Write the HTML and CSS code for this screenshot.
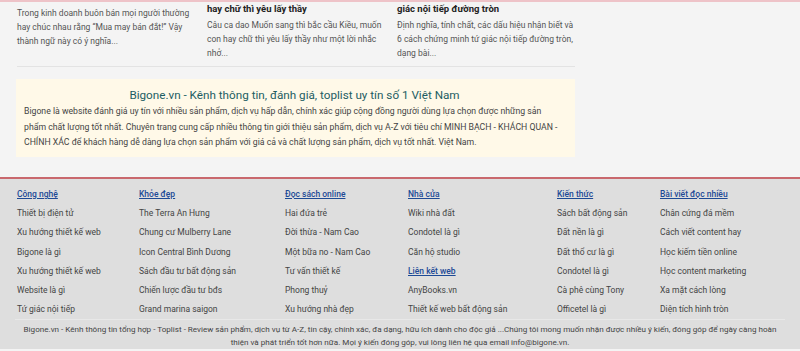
FILE: index.html
```html
<!DOCTYPE html>
<html lang="vi">
<head>
  <meta charset="UTF-8" />
  <title>Bigone.vn - Kênh thông tin, đánh giá, toplist</title>
  <link rel="stylesheet" href="styles.css">
</head>
<body>

  <div class="posts">
    <div class="posts-row">
      <div class="post post-cont">
        <p class="post-text">Trong kinh doanh buôn bán mọi người thường hay chúc nhau rằng “Mua may bán đắt!” Vậy thành ngữ này có ý nghĩa...</p>
      </div>
      <div class="post">
        <h3 class="post-title">hay chữ thì yêu lấy thầy</h3>
        <p class="post-text">Câu ca dao Muốn sang thì bắc cầu Kiều, muốn con hay chữ thì yêu lấy thầy như một lời nhắc nhở...</p>
      </div>
      <div class="post">
        <h3 class="post-title">giác nội tiếp đường tròn</h3>
        <p class="post-text">Định nghĩa, tính chất, các dấu hiệu nhận biết và 6 cách chứng minh tứ giác nội tiếp đường tròn, dạng bài...</p>
      </div>
    </div>
  </div>

  <div class="intro">
    <h2 class="intro-title">Bigone.vn - Kênh thông tin, đánh giá, toplist uy tín số 1 Việt Nam</h2>
    <p class="intro-text">Bigone là website đánh giá uy tín với nhiều sản phẩm, dịch vụ hấp dẫn, chính xác giúp cộng đồng người dùng lựa chọn được những sản phẩm chất lượng tốt nhất. Chuyên trang cung cấp nhiều thông tin giới thiệu sản phẩm, dịch vụ A-Z với tiêu chí MINH BẠCH - KHÁCH QUAN - CHÍNH XÁC để khách hàng dễ dàng lựa chọn sản phẩm với giá cả và chất lượng sản phẩm, dịch vụ tốt nhất. Việt Nam.</p>
  </div>

  <footer class="footer">
    <div class="footer-cols">
      <ul class="footer-col">
        <li class="footer-head"><a href="#">Công nghệ</a></li>
        <li><a href="#">Thiết bị điện tử</a></li>
        <li><a href="#">Xu hướng thiết kế web</a></li>
        <li><a href="#">Bigone là gì</a></li>
        <li><a href="#">Xu hướng thiết kế web</a></li>
        <li><a href="#">Website là gì</a></li>
        <li><a href="#">Tứ giác nội tiếp</a></li>
      </ul>
      <ul class="footer-col">
        <li class="footer-head"><a href="#">Khỏe đẹp</a></li>
        <li><a href="#">The Terra An Hưng</a></li>
        <li><a href="#">Chung cư Mulberry Lane</a></li>
        <li><a href="#">Icon Central Bình Dương</a></li>
        <li><a href="#">Sách đầu tư bất động sản</a></li>
        <li><a href="#">Chiến lược đầu tư bđs</a></li>
        <li><a href="#">Grand marina saigon</a></li>
      </ul>
      <ul class="footer-col">
        <li class="footer-head"><a href="#">Đọc sách online</a></li>
        <li><a href="#">Hai đứa trẻ</a></li>
        <li><a href="#">Đời thừa - Nam Cao</a></li>
        <li><a href="#">Một bữa no - Nam Cao</a></li>
        <li><a href="#">Tư vấn thiết kế</a></li>
        <li><a href="#">Phong thuỷ</a></li>
        <li><a href="#">Xu hướng nhà đẹp</a></li>
      </ul>
      <ul class="footer-col">
        <li class="footer-head"><a href="#">Nhà cửa</a></li>
        <li><a href="#">Wiki nhà đất</a></li>
        <li><a href="#">Condotel là gì</a></li>
        <li><a href="#">Căn hộ studio</a></li>
        <li class="footer-head"><a href="#">Liên kết web</a></li>
        <li><a href="#">AnyBooks.vn</a></li>
        <li><a href="#">Thiết kế web bất động sản</a></li>
      </ul>
      <ul class="footer-col">
        <li class="footer-head"><a href="#">Kiến thức</a></li>
        <li><a href="#">Sách bất động sản</a></li>
        <li><a href="#">Đất nền là gì</a></li>
        <li><a href="#">Đất thổ cư là gì</a></li>
        <li><a href="#">Condotel là gì</a></li>
        <li><a href="#">Cà phê cùng Tony</a></li>
        <li><a href="#">Officetel là gì</a></li>
      </ul>
      <ul class="footer-col">
        <li class="footer-head"><a href="#">Bài viết đọc nhiều</a></li>
        <li><a href="#">Chân cứng đá mềm</a></li>
        <li><a href="#">Cách viết content hay</a></li>
        <li><a href="#">Học kiếm tiền online</a></li>
        <li><a href="#">Học content marketing</a></li>
        <li><a href="#">Xa mặt cách lòng</a></li>
        <li><a href="#">Diện tích hình tròn</a></li>
      </ul>
    </div>

    <div class="footer-note">
      Bigone.vn - Kênh thông tin tổng hợp - Toplist - Review sản phẩm, dịch vụ từ A-Z, tin cậy, chính xác, đa dạng, hữu ích dành cho độc giả ...Chúng tôi mong muốn nhận được nhiều ý kiến, đóng góp để ngày càng hoàn thiện và phát triển tốt hơn nữa. Mọi ý kiến đóng góp, vui lòng liên hệ qua email info@bigone.vn.
    </div>
  </footer>

</body>
</html>
```

FILE: styles.css
```css
body {
  margin: 0;
  height: 100vh;
  overflow: hidden;
  background: #f4f4f4;
  font-family: Roboto, 'Noto Sans', sans-serif;
  color: #444;
}

/* bài viết phía trên */
.posts {
  border-top: 2px solid #eec3c8;
  padding-top: 1px;
}

.posts-row {
  display: grid;
  grid-template-columns: repeat(3, 178px);
  gap: 12px;
  width: 558px;
  margin-left: 17px;
  padding-bottom: 6px;
  border-bottom: 1px solid #e3e3e3;
}

.post-cont {
  padding-top: 3px;
}

.post-title {
  margin: 0 0 3px;
  font-size: 9.5px;
  line-height: 12px;
  font-weight: 700;
  color: #222;
}

.post-text {
  margin: 0;
  font-size: 8.5px;
  line-height: 14px;
  color: #555;
}

/* khung giới thiệu */
.intro {
  width: 559px;
  box-sizing: border-box;
  margin: 12px 0 0 16px;
  padding: 7px 10px 6px 8px;
  background: #fff9e8;
}

.intro-title {
  margin: 0;
  font-size: 11.7px;
  line-height: 18px;
  font-weight: 400;
  text-align: center;
  color: #1c5d63;
}

.intro-text {
  margin: 0;
  font-size: 8.7px;
  line-height: 15.5px;
  color: #444;
}

/* footer */
.footer {
  margin-top: 20px;
  border-top: 2px solid #c9686d;
  background: #dedede;
  padding: 6.5px 17px 0;
}

.footer-cols {
  display: grid;
  grid-template-columns: 122px 146px 123px 149px 103px 1fr;
}

.footer-col {
  list-style: none;
  margin: 0;
  padding: 0;
  font-size: 8.5px;
  line-height: 19.2px;
}

.footer-col a {
  color: #444;
  text-decoration: none;
}

.footer-head a {
  color: #1d4a96;
  text-decoration: underline;
  font-weight: 500;
}

.footer-note {
  margin: 0 -2px;
  padding-top: 2.5px;
  border-top: 1px solid #e8e8e8;
  font-size: 8.1px;
  line-height: 13px;
  text-align: center;
  color: #444;
}
```
